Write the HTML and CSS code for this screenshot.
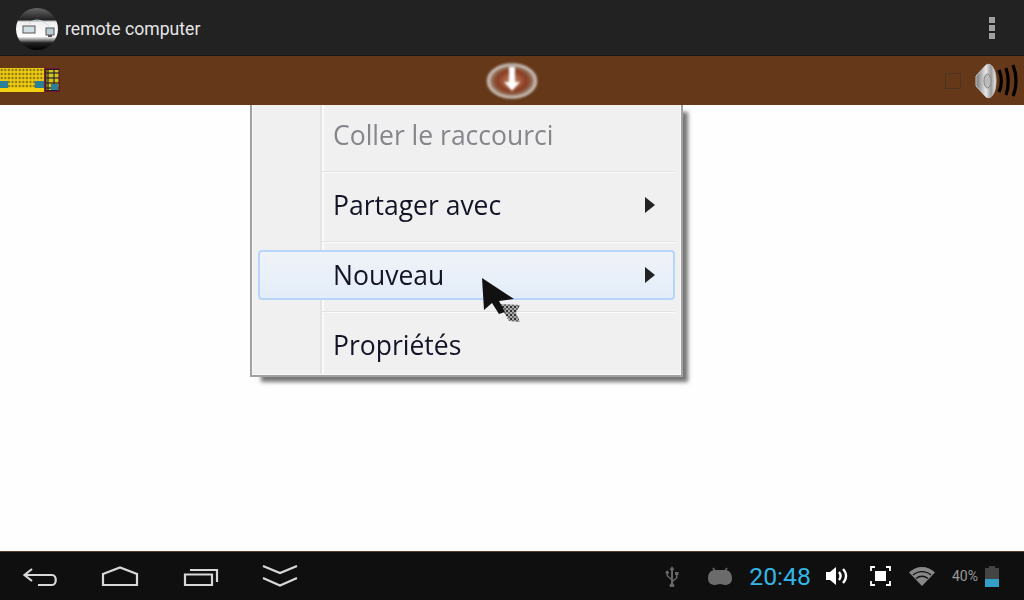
FILE: index.html
```html
<!DOCTYPE html>
<html lang="en">
<head>
  <meta charset="UTF-8">
  <title>remote computer</title>
  <link rel="stylesheet" href="styles.css">
</head>
<body>
  <div class="action-bar">
    <svg class="app-logo" viewBox="0 0 42 42">
      <defs>
        <linearGradient id="logoFill" x1="0" y1="0" x2="0" y2="1">
          <stop offset="0" stop-color="#666"/>
          <stop offset="0.28" stop-color="#222"/>
          <stop offset="0.33" stop-color="#eee"/>
          <stop offset="0.68" stop-color="#fff"/>
          <stop offset="0.83" stop-color="#222"/>
          <stop offset="1" stop-color="#000"/>
        </linearGradient>
      </defs>
      <circle cx="21" cy="21" r="21" fill="url(#logoFill)"/>
      <rect x="7" y="18" width="12" height="7" fill="#cfe0e4" stroke="#555"/>
      <path d="M13 16C18 10 26 11 33 18" fill="none" stroke="#c8dce0"/>
      <rect x="30" y="20" width="8" height="7" fill="#b6ccd0" stroke="#555"/>
      <rect x="32" y="27" width="4" height="2" fill="#555"/>
    </svg>
    <span class="app-title">remote computer</span>
    <div class="overflow-menu">
      <span class="overflow-dot"></span>
      <span class="overflow-dot"></span>
      <span class="overflow-dot"></span>
    </div>
  </div>

  <div class="toolbar">
    <div class="toolbar-left">
      <svg class="keyboard-icon" viewBox="0 0 60 24">
        <defs>
          <pattern id="keys" width="3.6" height="4" patternUnits="userSpaceOnUse">
            <rect width="3.6" height="4" fill="#f3cf12"/>
            <rect x="0.6" y="0.8" width="2.2" height="2.4" fill="#8f7c10"/>
          </pattern>
          <pattern id="padKeys" width="6" height="5" patternUnits="userSpaceOnUse">
            <rect width="6" height="5" fill="#1d2030"/>
            <rect x="0.6" y="0.6" width="4.8" height="3.8" fill="#d8c414"/>
          </pattern>
        </defs>
        <rect width="44" height="24" fill="#f3cf12"/>
        <rect width="44" height="20" fill="url(#keys)"/>
        <rect x="0" y="13" width="8" height="7" fill="#2b7f96"/>
        <rect x="35" y="13" width="9" height="7" fill="#2b7f96"/>
        <rect x="45" y="0.5" width="14.5" height="23" fill="#1d2030" stroke="#7a1030"/>
        <rect x="46.500" y="2" width="12" height="20" fill="url(#padKeys)"/>
        <rect x="51" y="16" width="7" height="6" fill="#2b7f96"/>
      </svg>
    </div>
    <svg class="down-button" viewBox="0 0 52 38">
      <defs>
        <radialGradient id="downFill">
          <stop offset="0" stop-color="#c89078"/>
          <stop offset="0.6" stop-color="#8a3c20"/>
          <stop offset="0.8" stop-color="#8c6048"/>
          <stop offset="1" stop-color="#d0c8c0"/>
        </radialGradient>
      </defs>
      <ellipse cx="26" cy="19" rx="24" ry="16.5" fill="url(#downFill)" stroke="#c4bcb4" stroke-width="2.5"/>
      <path d="M23 5h6v15h5l-8 9-8-9h5z" fill="#fff"/>
    </svg>
    <div class="toolbar-right">
      <span class="mute-box"></span>
      <svg class="speaker-icon" viewBox="0 0 44 36">
        <defs>
          <linearGradient id="coneFill" x1="0" y1="0" x2="1" y2="0">
            <stop offset="0" stop-color="#777"/>
            <stop offset="0.5" stop-color="#e8e8e8"/>
            <stop offset="0.75" stop-color="#999"/>
            <stop offset="1" stop-color="#eee"/>
          </linearGradient>
        </defs>
        <path d="M1 13 11 2c5-3 10 4 10 16s-5 19-10 16L1 23z" fill="url(#coneFill)" stroke="#c8c8c8"/>
        <ellipse cx="12.500" cy="18" rx="3.500" ry="7" fill="#bbb" stroke="#888"/>
        <path d="M24 7c3 7 3 15 0 22M31 5c3 9 3 18 0 27M38 2c4 10 4 22 0 31" fill="none" stroke="#000" stroke-width="3.200"/>
      </svg>
    </div>
  </div>

  <div class="desktop">
    <div class="context-menu">
      <div class="menu-item menu-item-disabled">
        <div class="item-box"><span>Coller le raccourci</span></div>
      </div>
      <div class="menu-sep"></div>
      <div class="menu-item">
        <div class="item-box"><span>Partager avec</span><i class="submenu-arrow"></i></div>
      </div>
      <div class="menu-sep"></div>
      <div class="menu-item menu-item-hover">
        <div class="item-box"><span>Nouveau</span><i class="submenu-arrow"></i></div>
      </div>
      <div class="menu-sep"></div>
      <div class="menu-item menu-item-last">
        <div class="item-box"><span>Propriétés</span></div>
      </div>
    </div>
    <svg class="mouse-cursor" viewBox="0 0 40 46">
      <defs>
        <pattern id="dither" width="4" height="4" patternUnits="userSpaceOnUse">
          <rect width="4" height="4" fill="#aaa"/>
          <rect width="2" height="2" fill="#333"/>
          <rect x="2" y="2" width="2" height="2" fill="#666"/>
        </pattern>
      </defs>
      <path d="M17 26l21 1-4 8 4 9-11-1z" fill="url(#dither)"/>
      <path d="M0 0 2 32l8-7 7 11 6-2-6-11 15-2z" fill="#111"/>
    </svg>
  </div>

  <div class="system-bar">
    <div class="nav-buttons">
      <div class="nav-button">
        <svg class="nav-icon" viewBox="0 0 40 30"><path d="M12 8 4.500 14l7.500 6M5 14h27c5 0 5 10 0 10H18"/></svg>
      </div>
      <div class="nav-button">
        <svg class="nav-icon" viewBox="0 0 40 30"><path d="M3 13 20 6.500 37 13v11H3z"/></svg>
      </div>
      <div class="nav-button">
        <svg class="nav-icon" viewBox="0 0 40 30"><path d="M5 13.500h27V24H5zM10 9h27v12"/></svg>
      </div>
      <div class="nav-button">
        <svg class="nav-icon" viewBox="0 0 40 30"><path d="M3 5 20 12 37 5M3 17l17 7.500L37 17"/></svg>
      </div>
    </div>
    <div class="status-icons">
      <svg class="status-usb" viewBox="0 0 16 21">
        <path d="M8 0l2.500 4H9v10l3-2.500V9h-1V6h3.500v3H13.500v3L9 16v1.200a2.400 2.400 0 1 1-2 0V14L2.500 10V8a1.700 1.700 0 1 1 1.500 0v1.500L7 12V4H5.500z" fill="#666"/>
      </svg>
      <svg class="status-android" viewBox="0 0 24 20">
        <path d="M5 2l2 3M19 2l-2 3" stroke="#6b6b6b" stroke-width="1.500"/>
        <path d="M7 4h10c4 0 7 3 7 8 0 5-3 7-7 7-2 0-3-1-5-1s-3 1-5 1c-4 0-7-2-7-7 0-5 3-8 7-8z" fill="#6b6b6b"/>
      </svg>
      <span class="status-time">20:48</span>
      <svg class="status-volume" viewBox="0 0 24 20">
        <path d="M0 6h4l6-5v18l-6-5H0z" fill="#fff"/>
        <path d="M13 6c2 2.500 2 5.500 0 8M17 3c4 4 4 10 0 14" fill="none" stroke="#fff" stroke-width="2.400"/>
      </svg>
      <svg class="status-focus" viewBox="0 0 21 20">
        <path d="M1 5V1h4M16 1h4v4M20 15v4h-4M5 19H1v-4" fill="none" stroke="#fff" stroke-width="1.800"/>
        <rect x="5" y="5" width="11" height="10" fill="#fff"/>
      </svg>
      <svg class="status-wifi" viewBox="0 0 26 20">
        <path d="M0 6.500C7-1 19-1 26 6.500L13 20z" fill="#888"/>
        <path d="M4 9c5-4.500 13-4.500 18 0M7 12.500c4-3 8-3 12 0" fill="none" stroke="#111" stroke-width="1.300"/>
      </svg>
      <span class="status-percent">40%</span>
      <div class="status-battery">
        <span class="battery-nub"></span>
        <span class="battery-empty"></span>
        <span class="battery-level"></span>
      </div>
    </div>
  </div>
</body>
</html>
```

FILE: styles.css
```css
html, body { margin: 0; padding: 0; }
body { width: 1024px; height: 600px; display: flex; flex-direction: column; overflow: hidden; font-family: Roboto, sans-serif; background: #fefefe; }

.action-bar { height: 55px; flex: none; display: flex; align-items: center; padding: 0 29px 0 16px; background: #222; border-bottom: 1px solid #181818; }
.app-logo { width: 42px; height: 42px; margin-top: 3px; filter: blur(0.4px); }
.app-title { margin: 3px 0 0 7px; font-size: 17.6px; color: #e6e6e6; }
.overflow-menu { margin-left: auto; display: flex; flex-direction: column; gap: 2px; margin-top: 1px; }
.overflow-dot { width: 6px; height: 6px; background: #a0a0a0; }

.toolbar { height: 49px; flex: none; display: grid; grid-template-columns: 1fr auto 1fr; align-items: center; background: #653819; }
.toolbar-left { display: flex; align-items: center; }
.keyboard-icon { width: 60px; height: 24px; margin-top: -1px; filter: blur(0.3px); }
.down-button { width: 52px; height: 38px; filter: blur(1px); }
.toolbar-right { display: flex; align-items: center; justify-content: flex-end; padding-right: 5px; }
.mute-box { width: 14px; height: 14px; border: 1px solid #4a3420; }
.speaker-icon { width: 44px; height: 36px; margin-left: 14px; }

.desktop { flex: 1; position: relative; overflow: hidden; padding-left: 250px; background: #fefefe; }
.context-menu { width: 429px; margin-top: -4px; background: #f0f0f0; border: 2px solid #a2a2a2; outline: 1px solid #f8f8f8; outline-offset: -3px; box-shadow: 8px 8px 4px -3px #777; background-image: linear-gradient(#e4e4e4, #e4e4e4), linear-gradient(#fafafa, #fafafa); background-size: 2px 100%, 2px 100%; background-position: 68px 0, 70px 0; background-repeat: no-repeat; filter: blur(0.5px); }
.menu-item { padding: 7px 6px 11px 6px; }
.menu-item-last { padding-bottom: 5px; }
.item-box { height: 46px; display: flex; align-items: center; justify-content: space-between; padding: 0 18px 0 73px; border: 2px solid transparent; border-radius: 4px; font-family: "Open Sans", sans-serif; font-size: 26.5px; line-height: 44px; color: #141428; }
.menu-item-disabled .item-box { color: #85858c; }
.menu-item-hover .item-box { border-color: #b8d6fb; background: linear-gradient(#f0f3f8, #e3edf9); }
.menu-sep { height: 2px; margin: 0 6px 0 70px; background: linear-gradient(#e2e2e2 50%, #fbfbfb 50%); }
.submenu-arrow { width: 0; height: 0; border-left: 10px solid #222; border-top: 8px solid transparent; border-bottom: 8px solid transparent; }
.mouse-cursor { position: absolute; left: 482px; top: 173px; width: 40px; height: 46px; filter: blur(0.5px); }

.system-bar { height: 48px; flex: none; display: flex; align-items: center; justify-content: space-between; background: #0f0f0f; border-top: 1px solid #55402c; }
.nav-buttons { display: flex; }
.nav-button { width: 80px; display: flex; justify-content: center; }
.nav-icon { width: 40px; height: 30px; fill: none; stroke: #d8d8d8; stroke-width: 2.2; }
.status-icons { display: flex; align-items: center; padding-right: 25px; }
.status-usb { width: 16px; height: 21px; }
.status-android { width: 24px; height: 20px; margin-left: 28px; }
.status-time { margin: 1px 0 0 17px; font-size: 24.8px; color: #33b5e5; }
.status-volume { width: 24px; height: 20px; margin-left: 15px; }
.status-focus { width: 21px; height: 20px; margin-left: 20px; }
.status-wifi { width: 26px; height: 20px; margin-left: 18px; }
.status-percent { margin-left: 17px; font-size: 14px; color: #999; }
.status-battery { width: 14px; margin-left: 7px; display: flex; flex-direction: column; align-items: center; }
.battery-nub { width: 6px; height: 2px; background: #444; }
.battery-empty { width: 14px; height: 11px; background: #444; }
.battery-level { width: 14px; height: 8px; background: #33a0c8; }
```
